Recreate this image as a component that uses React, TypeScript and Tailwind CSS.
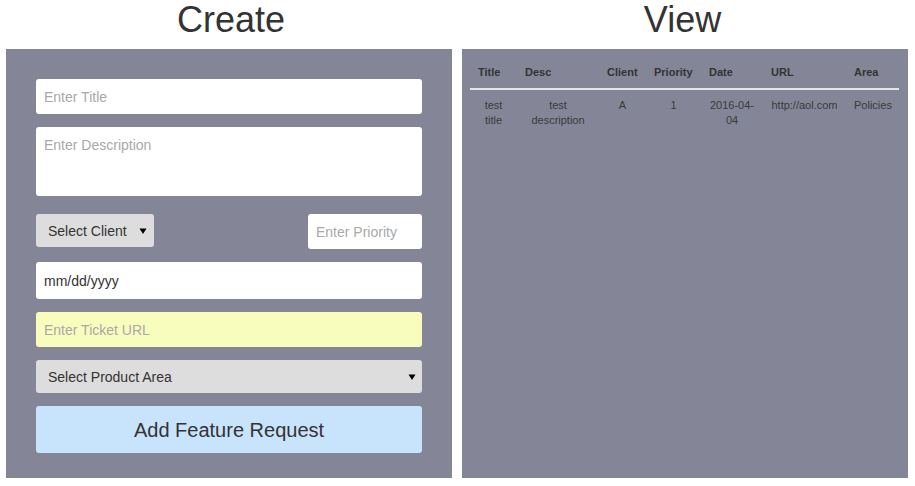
import React from 'react';

const font = { fontFamily: '"Liberation Sans", Arial, sans-serif' };

function Caret() {
  return (
    <svg className="w-2 h-2 text-black" viewBox="0 0 8 8" fill="currentColor">
      <path d="M0.5 1.5h7L4 7z" />
    </svg>
  );
}

const rows = [
  {
    title: 'test title',
    desc: 'test description',
    client: 'A',
    priority: '1',
    date: '2016-04-04',
    url: 'http://aol.com',
    area: 'Policies',
  },
];

export default function App() {
  return (
    <div className="w-[915px] h-[486px] bg-white text-[#333]" style={font}>
      <div className="flex gap-[10px] pl-[6px] pr-[7px]">
        {/* Create column */}
        <div className="w-[446px] flex flex-col">
          <h1 className="h-[49px] pl-[4px] text-center text-[36px] leading-[40px] text-[#333]">Create</h1>
          <div className="bg-[#848698] h-[429px] px-[30px] pt-[30px] flex flex-col">
            <input
              className="h-[35px] bg-white rounded-[3px] px-[8px] text-[14px] placeholder:text-[#a9a9a9] outline-none"
              placeholder="Enter Title"
            />
            <textarea
              className="mt-[13px] h-[69px] bg-white rounded-[3px] px-[8px] pt-[8px] text-[14px] placeholder:text-[#a9a9a9] outline-none resize-none"
              placeholder="Enter Description"
            />
            <div className="mt-[18px] flex justify-between items-start">
              <div className="relative w-[118px] h-[33px] bg-[#dddddd] rounded-[3px] flex items-center pl-[12px] pt-[1px] text-[14px] text-[#333]">
                Select Client
                <span className="absolute right-[7px] top-[13px]">
                  <Caret />
                </span>
              </div>
              <input
                className="w-[114px] h-[35px] bg-white rounded-[3px] px-[8px] text-[14px] placeholder:text-[#a9a9a9] outline-none"
                placeholder="Enter Priority"
              />
            </div>
            <input
              className="mt-[13px] h-[37px] bg-white rounded-[3px] px-[8px] text-[14px] text-[#333] outline-none"
              defaultValue="mm/dd/yyyy"
              readOnly
            />
            <input
              className="mt-[13px] h-[35px] bg-[#f8fcbd] rounded-[3px] px-[8px] text-[14px] placeholder:text-[#a9a9a9] outline-none"
              placeholder="Enter Ticket URL"
            />
            <div className="relative mt-[13px] h-[33px] bg-[#dddddd] rounded-[3px] flex items-center pl-[12px] pt-[1px] text-[14px] text-[#333]">
              Select Product Area
              <span className="absolute right-[6px] top-[13px]">
                <Caret />
              </span>
            </div>
            <button
              type="button"
              className="mt-[13px] h-[47px] bg-[#c8e4fc] rounded-[3px] text-[20px] text-[#333]"
            >
              Add Feature Request
            </button>
          </div>
        </div>

        {/* View column */}
        <div className="w-[446px] flex flex-col">
          <h1 className="h-[49px] pr-[5px] text-center text-[36px] leading-[40px] text-[#333]">View</h1>
          <div className="bg-[#848698] h-[429px] pl-[8px] pr-[9px] pt-[8px]">
            <table className="w-[429px] table-fixed border-collapse text-[11px] leading-[15px]">
              <thead>
                <tr className="border-b-2 border-[#e6e6e6]">
                  <th className="w-[47px] p-[8px] text-left font-bold text-[#333]">Title</th>
                  <th className="w-[82px] p-[8px] text-left font-bold text-[#333]">Desc</th>
                  <th className="w-[47px] p-[8px] text-left font-bold text-[#333]">Client</th>
                  <th className="w-[55px] p-[8px] text-left font-bold text-[#333]">Priority</th>
                  <th className="w-[62px] p-[8px] text-left font-bold text-[#333]">Date</th>
                  <th className="w-[83px] p-[8px] text-left font-bold text-[#333]">URL</th>
                  <th className="w-[53px] p-[8px] text-left font-bold text-[#333]">Area</th>
                </tr>
              </thead>
              <tbody>
                {rows.map((r) => (
                  <tr key={r.title} className="text-[#3a3a3a]">
                    <td className="p-[8px] text-center align-top">{r.title}</td>
                    <td className="p-[8px] text-center align-top">{r.desc}</td>
                    <td className="p-[8px] text-center align-top">{r.client}</td>
                    <td className="p-[8px] text-center align-top">{r.priority}</td>
                    <td className="p-[8px] text-center align-top">{r.date}</td>
                    <td className="p-[8px] text-center align-top whitespace-nowrap">{r.url}</td>
                    <td className="p-[8px] text-center align-top">{r.area}</td>
                  </tr>
                ))}
              </tbody>
            </table>
          </div>
        </div>
      </div>
    </div>
  );
}
